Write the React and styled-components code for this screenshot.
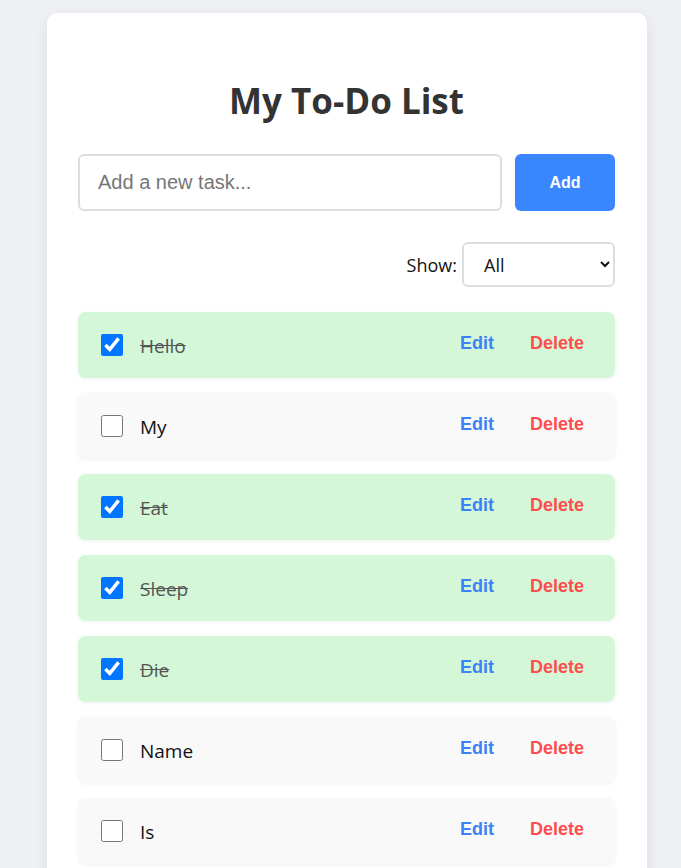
import { useState } from 'react';
import styled, { createGlobalStyle } from 'styled-components';

const GlobalStyle = createGlobalStyle`
    body {
        margin: 0;
        padding: 13px 34px 0 47px;
        background-color: #eef0f4;
        font-family: 'Open Sans', 'Noto Sans', sans-serif;
    }
`;

const initialTasks = [
    {id: 1, name: 'Hello', isComplete: true},
    {id: 2, name: 'My', isComplete: false},
    {id: 3, name: 'Eat', isComplete: true},
    {id: 4, name: 'Sleep', isComplete: true},
    {id: 5, name: 'Die', isComplete: true},
    {id: 6, name: 'Name', isComplete: false},
    {id: 7, name: 'Is', isComplete: false},
];

export default function App() {
    const [tasks, setTasks] = useState(initialTasks);
    const [newTask, setNewTask] = useState('');
    const [filter, setFilter] = useState('all');

    const addTask = () => {
        if (!newTask.trim()) return;
        setTasks([...tasks, {id: Date.now(), name: newTask.trim(), isComplete: false}]);
        setNewTask('');
    };

    const toggle = id => setTasks(tasks.map(t => t.id === id ? {...t, isComplete: !t.isComplete} : t));
    const remove = id => setTasks(tasks.filter(t => t.id !== id));

    const shown = tasks.filter(t =>
        filter === 'all' ? true : filter === 'done' ? t.isComplete : !t.isComplete
    );

    return (
        <>
            <GlobalStyle />
            <Card>
                <Title>My To-Do List</Title>
                <Form onSubmit={(e) => {e.preventDefault(); addTask()}}>
                    <TaskInput
                        type="text"
                        placeholder="Add a new task..."
                        value={newTask}
                        onChange={(e) => setNewTask(e.target.value)}
                    />
                    <AddButton type="submit">Add</AddButton>
                </Form>
                <FilterRow>
                    <FilterLabel htmlFor="filter">Show:</FilterLabel>
                    <Select id="filter" value={filter} onChange={(e) => setFilter(e.target.value)}>
                        <option value="all">All</option>
                        <option value="done">Completed</option>
                        <option value="todo">Pending</option>
                    </Select>
                </FilterRow>
                <List>
                    {shown.map(task =>
                        <Item key={task.id} done={task.isComplete}>
                            <Check type="checkbox" checked={task.isComplete} onChange={() => toggle(task.id)} />
                            <Name done={task.isComplete}>{task.name}</Name>
                            <Action color="#3b82f6">Edit</Action>
                            <Action color="#ff4d4f" onClick={() => remove(task.id)}>Delete</Action>
                        </Item>
                    )}
                </List>
            </Card>
        </>
    );
}

const Card = styled.main`
    max-width: 600px;
    box-sizing: border-box;
    background: white;
    border-radius: 10px;
    box-shadow: 0 4px 14px rgba(0, 0, 0, 0.08);
    padding: 64px 32px 40px 31px;
    min-height: 900px;
`;

const Title = styled.h1`
    margin: 0 0 29px;
    text-align: center;
    font-size: 35px;
    line-height: 48px;
    font-weight: 700;
    color: #333;
`;

const Form = styled.form`
    display: flex;
    gap: 13px;
`;

const TaskInput = styled.input`
    flex: 1;
    height: 57px;
    box-sizing: border-box;
    border: 2px solid #ddd;
    border-radius: 6px;
    padding: 0 18px;
    font-family: 'Liberation Sans', Arial, sans-serif;
    font-size: 20px;
    outline: none;

    &::placeholder {
        color: #767676;
    }
`;

const AddButton = styled.button`
    width: 100px;
    height: 57px;
    border: none;
    border-radius: 6px;
    background-color: #3a86ff;
    color: white;
    font-family: 'Liberation Sans', Arial, sans-serif;
    font-size: 16px;
    font-weight: bold;
    cursor: pointer;
`;

const FilterRow = styled.div`
    display: flex;
    justify-content: flex-end;
    align-items: center;
    gap: 5px;
    margin-top: 31px;
`;

const FilterLabel = styled.label`
    font-size: 18px;
    color: #111;
`;

const Select = styled.select`
    width: 153px;
    height: 45px;
    border: 2px solid #ddd;
    border-radius: 6px;
    padding: 0 16px;
    background: white;
    font-family: 'Open Sans', sans-serif;
    font-size: 18px;
    color: #111;
`;

const List = styled.ul`
    list-style: none;
    margin: 25px 0 0;
    padding: 0;
    display: flex;
    flex-direction: column;
    gap: 15px;
`;

const Item = styled.li`
    display: flex;
    align-items: center;
    height: 66px;
    box-sizing: border-box;
    padding: 0 15px 0 23px;
    border-radius: 8px;
    background-color: ${props => props.done ? '#d4f7d8' : '#f9f9f9'};
    box-shadow: 0 1px 4px rgba(0, 0, 0, 0.06);
`;

const Check = styled.input`
    width: 22px;
    height: 22px;
    margin: 0 17px 0 0;
    cursor: pointer;
`;

const Name = styled.span`
    flex: 1;
    font-size: 19px;
    margin-top: 1px;
    color: ${props => props.done ? '#555' : '#111'};
    text-decoration: ${props => props.done ? 'line-through' : 'none'};
`;

const Action = styled.button`
    border: none;
    background: none;
    padding: 6px 16px 10px;
    margin-left: 4px;
    font-family: 'Liberation Sans', Arial, sans-serif;
    font-size: 18px;
    font-weight: bold;
    color: ${props => props.color};
    cursor: pointer;
`;
